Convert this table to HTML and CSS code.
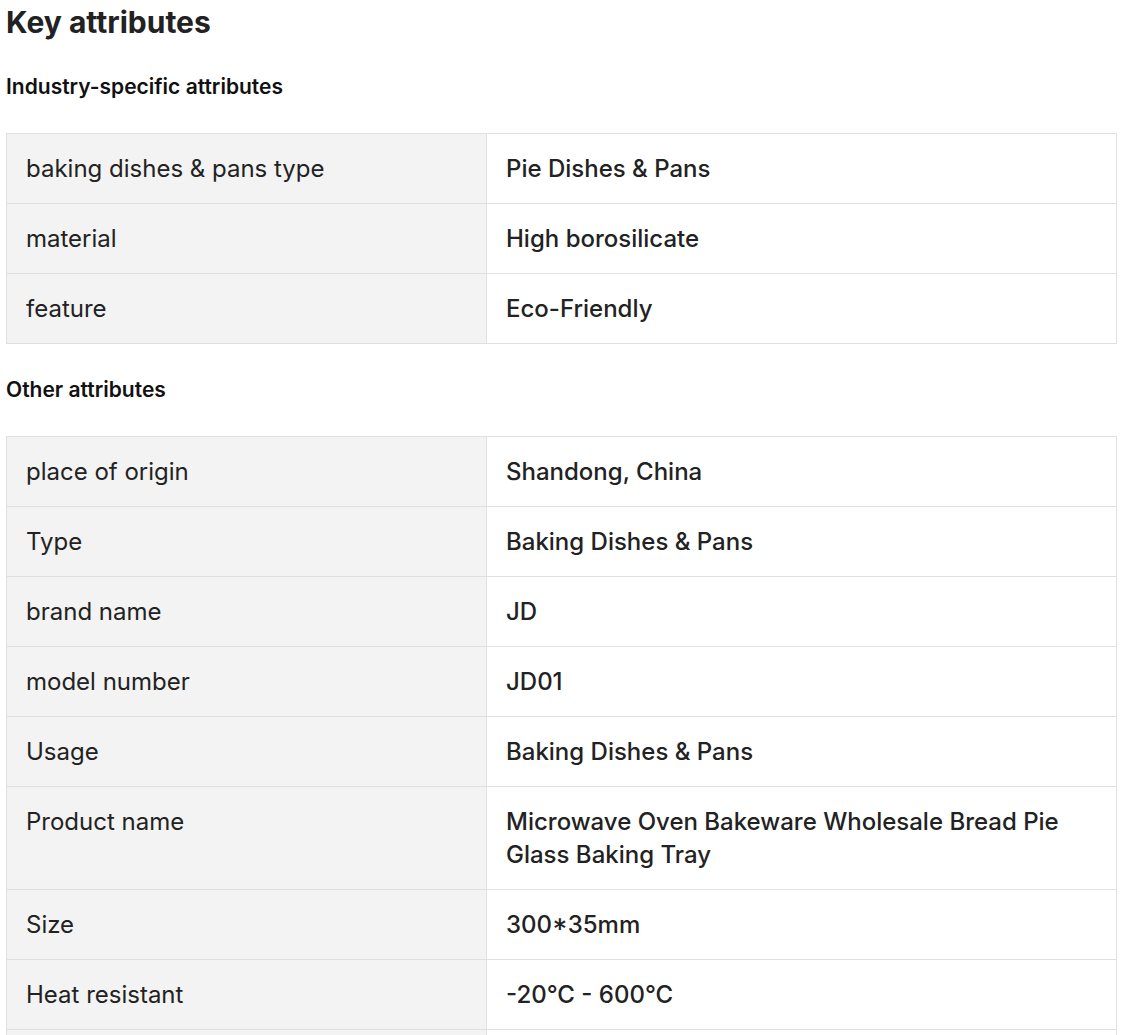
FILE: index.html
```html
<!DOCTYPE html>
<html lang="en">
<head>
<meta charset="utf-8">
<title>Key attributes</title>
<link rel="stylesheet" href="styles.css">
</head>
<body>
<div class="attrs">
  <h2 class="title">Key attributes</h2>
  <h3 class="subtitle first">Industry-specific attributes</h3>
  <table class="attr-table">
    <tr><td class="k">baking dishes &amp; pans type</td><td class="v">Pie Dishes &amp; Pans</td></tr>
    <tr><td class="k">material</td><td class="v">High borosilicate</td></tr>
    <tr><td class="k">feature</td><td class="v">Eco-Friendly</td></tr>
  </table>
  <h3 class="subtitle">Other attributes</h3>
  <table class="attr-table">
    <tr><td class="k">place of origin</td><td class="v">Shandong, China</td></tr>
    <tr><td class="k">Type</td><td class="v">Baking Dishes &amp; Pans</td></tr>
    <tr><td class="k">brand name</td><td class="v">JD</td></tr>
    <tr><td class="k">model number</td><td class="v">JD01</td></tr>
    <tr><td class="k">Usage</td><td class="v">Baking Dishes &amp; Pans</td></tr>
    <tr><td class="k">Product name</td><td class="v">Microwave Oven Bakeware Wholesale Bread Pie Glass Baking Tray</td></tr>
    <tr><td class="k">Size</td><td class="v">300*35mm</td></tr>
    <tr><td class="k">Heat resistant</td><td class="v">-20°C - 600°C</td></tr>
    <tr><td class="k">Shape</td><td class="v">Round</td></tr>
  </table>
</div>
</body>
</html>
```
FILE: styles.css
```css
html, body {
  margin: 0;
  padding: 0;
  background: #fff;
}
body {
  font-family: Inter, "Noto Sans", "Liberation Sans", sans-serif;
  color: #222;
}
.attrs {
  padding: 4px 0 0 6px;
  width: 1111px;
}
.title {
  margin: 0;
  font-size: 30px;
  line-height: 36px;
  font-weight: 700;
  color: #222;
}
.subtitle {
  margin: 34px 0;
  font-size: 21px;
  line-height: 24px;
  font-weight: 600;
  color: #111;
}
.subtitle.first {
  margin-top: 35px;
}
.attr-table {
  width: 1111px;
  border-collapse: collapse;
  table-layout: fixed;
}
.attr-table td {
  border: 1px solid #e0e0e0;
  padding: 18px 20px 18px 19px;
  font-size: 24px;
  line-height: 33px;
  vertical-align: top;
  color: #222;
}
.attr-table .k {
  width: 480px;
  background: #f3f3f3;
  font-weight: 400;
  box-sizing: border-box;
}
.attr-table .v {
  background: #fff;
  font-weight: 500;
  padding-right: 40px;
}
```
